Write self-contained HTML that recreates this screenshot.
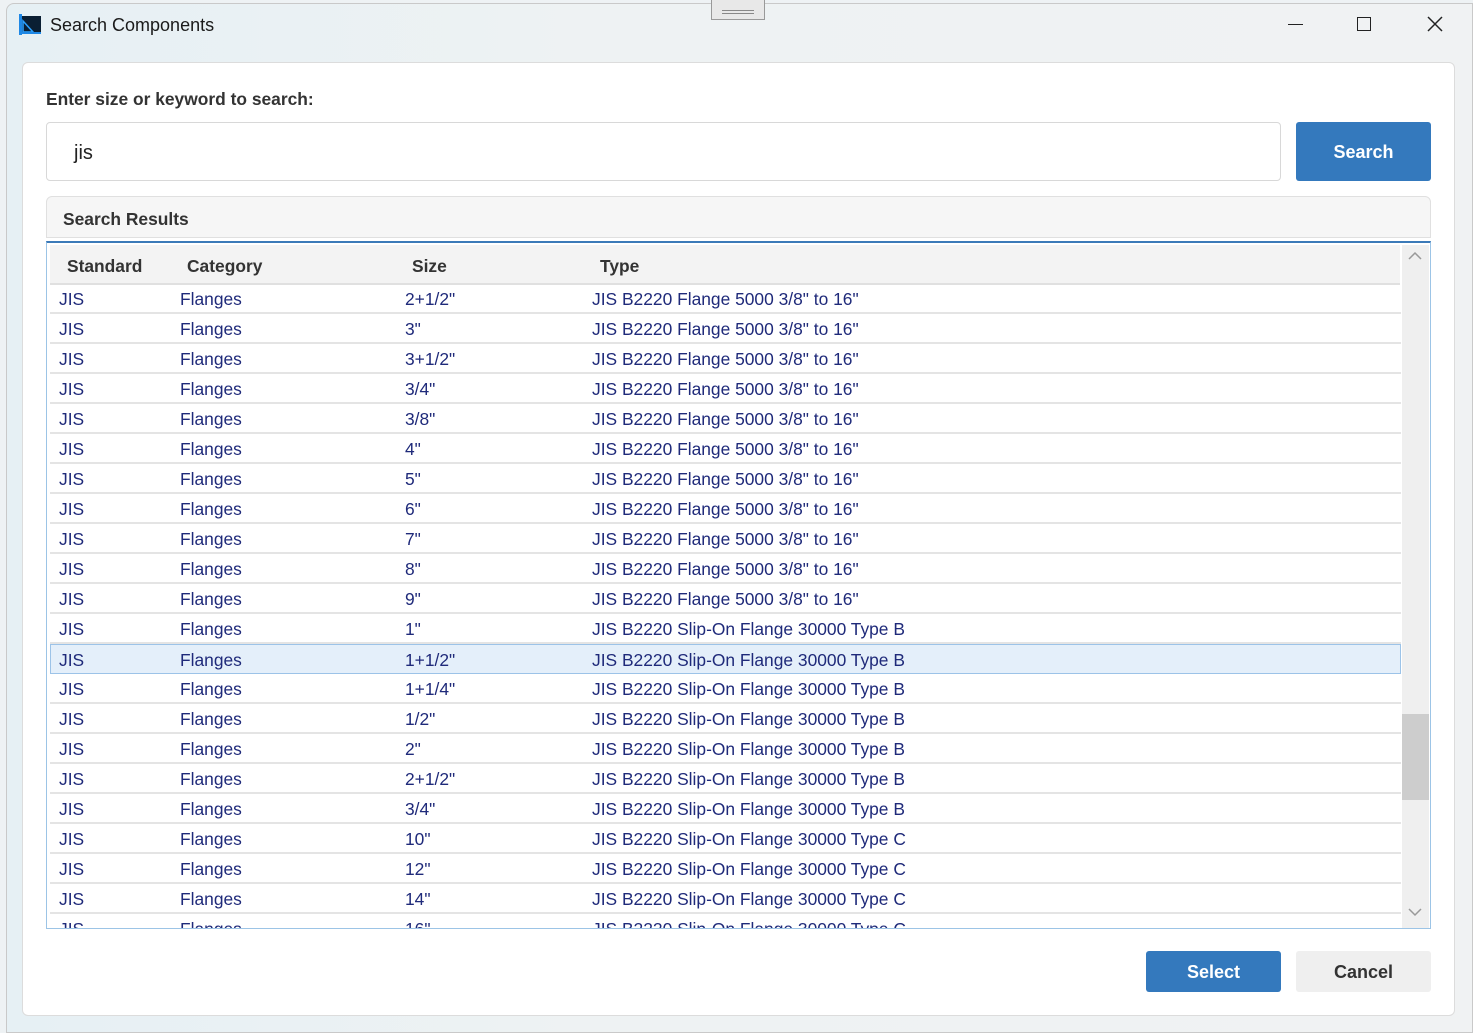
<!DOCTYPE html>
<html><head><style>
*{margin:0;padding:0;box-sizing:border-box}
body{width:1473px;height:1030px;background:#eef2f4;font-family:"Liberation Sans",sans-serif;position:relative;overflow:hidden;color:#1b1b1b}
.win{position:absolute;left:6px;top:3px;width:1467px;height:1030px;background:linear-gradient(90deg,#e6f0f4,#eef2f3 40%,#f0f2f3);border:1px solid #c9c9c9;border-radius:8px 0 0 0}
.title{position:absolute;left:50px;top:15px;font-size:18px;color:#1a1a1a}
.panel{position:absolute;left:22px;top:62px;width:1433px;height:954px;background:#fff;border:1px solid #dcdcdc;border-radius:6px}
.abs{position:absolute}
.row{position:absolute;left:50px;width:1351px;height:30px;border-bottom:2px solid #e4e4e4;font-size:17.4px;color:#1f2a7a}
.row span{position:absolute;top:5px}
.btn{position:absolute;border-radius:3px;font-size:18px;font-weight:bold;text-align:center;line-height:43px}
</style></head><body>
<div class="win"></div>
<svg class="abs" style="left:18px;top:13px" width="24" height="24" viewBox="0 0 24 24"><rect x="2" y="3" width="21" height="18" fill="#0a1f33"/><rect x="1" y="1" width="3" height="21" fill="#1e88e5"/><path d="M5 8 L5 19 L15 19 Z" fill="none" stroke="#2aa0ff" stroke-width="1.5"/><rect x="1" y="19" width="22" height="2" fill="#1e88e5"/></svg>
<div class="title">Search Components</div>
<div class="abs" style="left:711px;top:0;width:54px;height:20px;border:1px solid #999;border-top:none;background:#e8e8e8"><div class="abs" style="left:10px;top:10px;width:32px;height:1px;background:#888"></div><div class="abs" style="left:10px;top:13px;width:32px;height:1px;background:#888"></div></div>
<div class="abs" style="left:1288px;top:24px;width:15px;height:1px;background:#222"></div>
<div class="abs" style="left:1357px;top:17px;width:14px;height:14px;border:1.5px solid #222"></div>
<svg class="abs" style="left:1427px;top:16px" width="16" height="16"><path d="M1 1L15 15M15 1L1 15" stroke="#222" stroke-width="1.5"/></svg>
<div class="panel"></div>
<div class="abs" style="left:46px;top:89px;font-size:17.4px;font-weight:bold;color:#333">Enter size or keyword to search:</div>
<div class="abs" style="left:46px;top:122px;width:1235px;height:59px;border:1px solid #d8d8d8;border-radius:4px;font-size:20px;padding:19px 0 0 27px;color:#222">jis</div>
<div class="btn" style="left:1296px;top:122px;width:135px;height:59px;line-height:61px;background:#3479bd;color:#fff">Search</div>
<div class="abs" style="left:46px;top:196px;width:1385px;height:42px;background:#f6f6f6;border:1px solid #e0e0e0;border-radius:6px 6px 0 0;font-size:17.4px;font-weight:bold;padding:12px 0 0 16px;color:#333">Search Results</div>
<div class="abs" style="left:46px;top:241px;width:1385px;height:688px;border:1px solid #9cc4e6;border-top:2px solid #3b7ab8;overflow:hidden">
<div class="abs" style="left:3px;top:2px;width:1350px;height:40px;background:#f3f3f3;border-bottom:2px solid #e0e0e0;font-size:17.4px;font-weight:bold;color:#333">
<span class="abs" style="left:17px;top:11px">Standard</span><span class="abs" style="left:137px;top:11px">Category</span><span class="abs" style="left:362px;top:11px">Size</span><span class="abs" style="left:550px;top:11px">Type</span></div>
<div class="abs" style="left:1355px;top:2px;width:27px;height:684px;background:#efefef"></div>
<div class="abs" style="left:1355px;top:471px;width:27px;height:86px;background:#cdcdcd"></div>
<svg class="abs" style="left:1361px;top:8px" width="14" height="10"><path d="M1 8L7 2L13 8" fill="none" stroke="#999" stroke-width="1.5"/></svg>
<svg class="abs" style="left:1361px;top:664px" width="14" height="10"><path d="M1 2L7 8L13 2" fill="none" stroke="#999" stroke-width="1.5"/></svg>
</div>
<div id="rows"></div>
<div class="btn" style="left:1146px;top:951px;width:135px;height:41px;background:#3479bd;color:#fff">Select</div>
<div class="btn" style="left:1296px;top:951px;width:135px;height:41px;background:#efefef;color:#333">Cancel</div>
<script>
var d=[["2+1/2\"","A"],["3\"","A"],["3+1/2\"","A"],["3/4\"","A"],["3/8\"","A"],["4\"","A"],["5\"","A"],["6\"","A"],["7\"","A"],["8\"","A"],["9\"","A"],["1\"","B"],["1+1/2\"","B"],["1+1/4\"","B"],["1/2\"","B"],["2\"","B"],["2+1/2\"","B"],["3/4\"","B"],["10\"","C"],["12\"","C"],["14\"","C"],["16\"","C"]];
var T={A:'JIS B2220 Flange 5000 3/8" to 16"',B:"JIS B2220 Slip-On Flange 30000 Type B",C:"JIS B2220 Slip-On Flange 30000 Type C"};
var h="";d.forEach(function(r,i){var t=T[r[1]];var top=284+i*30-(i>12?0.5:0);var sel=i==12?"background:#e4effa;border:1px solid #9cc3e8;":"";
var clip=i==21?"height:14px;overflow:hidden;border:none;":"";var off=i==12?-1:0;
h+='<div class="row" style="top:'+top+'px;'+sel+clip+'"><span style="left:'+(9+off)+'px">JIS</span><span style="left:'+(130+off)+'px">Flanges</span><span style="left:'+(355+off)+'px">'+r[0]+'</span><span style="left:'+(542+off)+'px">'+t+'</span></div>';});
document.getElementById("rows").innerHTML=h;
</script>
</body></html>
